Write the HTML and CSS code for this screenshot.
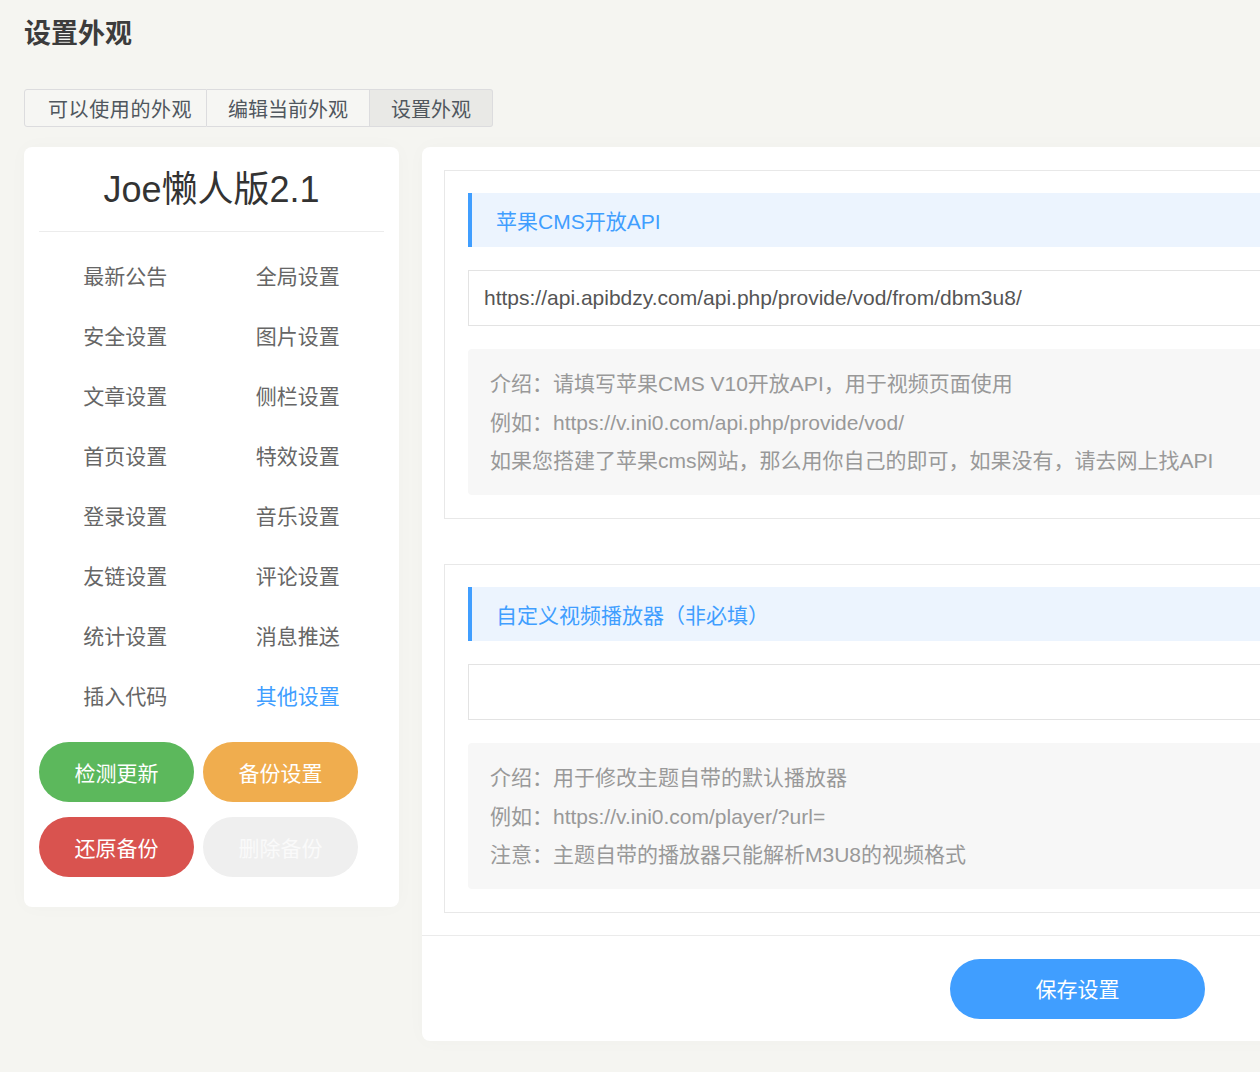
FILE: index.html
```html
<!DOCTYPE html>
<html lang="zh-CN">
<head>
<meta charset="utf-8">
<title>设置外观</title>
<link rel="stylesheet" href="styles.css">
</head>
<body>
<div class="page">
  <h1 class="page-title">设置外观</h1>
  <div class="tabs">
    <a class="tab tab-wide">可以使用的外观</a>
    <a class="tab">编辑当前外观</a>
    <a class="tab tab-active">设置外观</a>
  </div>
  <div class="layout">
    <aside class="side-card">
      <div class="side-title">Joe懒人版2.1</div>
      <ul class="menu">
        <li>最新公告</li>
        <li>全局设置</li>
        <li>安全设置</li>
        <li>图片设置</li>
        <li>文章设置</li>
        <li>侧栏设置</li>
        <li>首页设置</li>
        <li>特效设置</li>
        <li>登录设置</li>
        <li>音乐设置</li>
        <li>友链设置</li>
        <li>评论设置</li>
        <li>统计设置</li>
        <li>消息推送</li>
        <li>插入代码</li>
        <li class="menu-active">其他设置</li>
      </ul>
      <div class="actions">
        <span class="pill pill-green">检测更新</span>
        <span class="pill pill-orange">备份设置</span>
        <span class="pill pill-red">还原备份</span>
        <span class="pill pill-grey">删除备份</span>
      </div>
    </aside>
    <main class="panel">
      <div class="panel-body">
        <section class="option">
          <div class="option-label">苹果CMS开放API</div>
          <div class="option-input">https://api.apibdzy.com/api.php/provide/vod/from/dbm3u8/</div>
          <div class="option-desc">
            <p>介绍：请填写苹果CMS V10开放API，用于视频页面使用</p>
            <p>例如：https://v.ini0.com/api.php/provide/vod/</p>
            <p>如果您搭建了苹果cms网站，那么用你自己的即可，如果没有，请去网上找API</p>
          </div>
        </section>
        <section class="option">
          <div class="option-label">自定义视频播放器（非必填）</div>
          <div class="option-input"></div>
          <div class="option-desc">
            <p>介绍：用于修改主题自带的默认播放器</p>
            <p>例如：https://v.ini0.com/player/?url=</p>
            <p>注意：主题自带的播放器只能解析M3U8的视频格式</p>
          </div>
        </section>
      </div>
      <div class="panel-footer">
        <span class="save-btn">保存设置</span>
      </div>
    </main>
  </div>
</div>
</body>
</html>
```

FILE: styles.css
```css
html, body {
  margin: 0;
  padding: 0;
  overflow: hidden;
  background: #f5f5f1;
}

body {
  font-family: "Liberation Sans", Arial, "Noto Sans CJK SC", sans-serif;
  color: #333;
  width: 1260px;
  height: 1072px;
}

.page {
  padding: 0 0 0 24px;
}

.page-title {
  margin: 0;
  padding-top: 16px;
  height: 36px;
  font-size: 27px;
  line-height: 36px;
  font-weight: bold;
  color: #3c3c3c;
}

.tabs {
  display: flex;
  margin-top: 37px;
  height: 38px;
}

.tab {
  display: flex;
  align-items: center;
  padding: 0 21px;
  font-size: 20px;
  color: #50575e;
  background: #f6f6f3;
  border: 1px solid #dcdcde;
  border-left-width: 0;
  box-sizing: border-box;
  height: 38px;
}

.tab-wide {
  border-left-width: 1px;
  border-radius: 3px 0 0 3px;
  width: 183px;
  padding: 0 0 0 23px;
  letter-spacing: 0.6px;
}

.tab-active {
  background: #e9e9e6;
  border-radius: 0 3px 3px 0;
}

.layout {
  display: flex;
  align-items: flex-start;
  gap: 23px;
  margin-top: 20px;
}

.side-card {
  flex: 0 0 375px;
  box-sizing: border-box;
  background: #fff;
  border-radius: 8px;
  padding: 17px 15px 30px;
  box-shadow: 0 0 20px rgba(0, 0, 0, 0.025);
}

.side-title {
  text-align: center;
  font-size: 36px;
  line-height: 52px;
  color: #333;
  padding-bottom: 15px;
  border-bottom: 1px solid #ececec;
}

.menu {
  list-style: none;
  margin: 15px 0 0;
  padding: 0;
  display: grid;
  grid-template-columns: 1fr 1fr;
}

.menu li {
  height: 60px;
  line-height: 60px;
  text-align: center;
  font-size: 21px;
  color: #666;
}

.menu .menu-active {
  color: #409eff;
}

.actions {
  display: grid;
  grid-template-columns: 155px 155px;
  column-gap: 9px;
  row-gap: 15px;
  margin-top: 15px;
}

.pill {
  display: flex;
  align-items: center;
  justify-content: center;
  height: 60px;
  border-radius: 30px;
  font-size: 21px;
  color: #fff;
}

.pill-green { background: #5cb85c; }
.pill-orange { background: #f0ad4e; }
.pill-red { background: #d9534f; }
.pill-grey { background: #efefef; color: #fafafa; }

.panel {
  flex: 0 0 1311px;
  background: #fff;
  border-radius: 8px;
  box-shadow: 0 0 20px rgba(0, 0, 0, 0.025);
}

.panel-body {
  padding: 23px 22px 22px;
  display: flex;
  flex-direction: column;
  gap: 45px;
}

.option {
  border: 1px solid #e8e8e8;
  padding: 22px 23px 23px;
  display: flex;
  flex-direction: column;
  gap: 23px;
}

.option-label {
  height: 54px;
  display: flex;
  align-items: center;
  box-sizing: border-box;
  padding-left: 24px;
  border-left: 4px solid #409eff;
  background: #ecf4fe;
  color: #409eff;
  font-size: 21px;
}

.option-input {
  height: 56px;
  box-sizing: border-box;
  border: 1px solid #e3e3e3;
  display: flex;
  align-items: center;
  padding-left: 15px;
  font-size: 21px;
  color: #555;
}

.option-desc {
  background: #f7f7f7;
  border-radius: 4px;
  padding: 16px 22px 15px;
  height: 146px;
  box-sizing: border-box;
}

.option-desc p {
  margin: 0;
  font-size: 21px;
  line-height: 38.5px;
  color: #999;
}

.panel-footer {
  border-top: 1px solid #ebebeb;
  padding: 23px 0 22px;
  display: flex;
  justify-content: center;
}

.save-btn {
  width: 255px;
  height: 60px;
  border-radius: 30px;
  background: #409eff;
  color: #fff;
  font-size: 21px;
  display: flex;
  align-items: center;
  justify-content: center;
  padding-bottom: 3px;
  box-sizing: border-box;
}
```
